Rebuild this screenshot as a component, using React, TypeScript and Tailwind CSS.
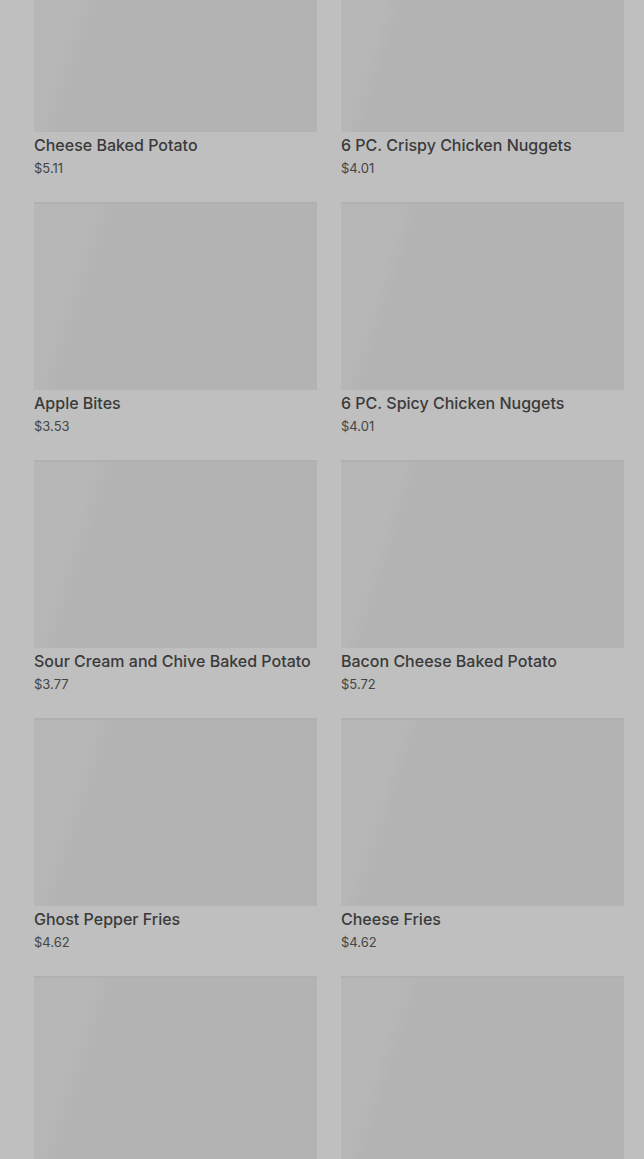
import React from 'react';

type Item = { name?: string; price?: string };

const items: Item[] = [
  { name: 'Cheese Baked Potato', price: '$5.11' },
  { name: '6 PC. Crispy Chicken Nuggets', price: '$4.01' },
  { name: 'Apple Bites', price: '$3.53' },
  { name: '6 PC. Spicy Chicken Nuggets', price: '$4.01' },
  { name: 'Sour Cream and Chive Baked Potato', price: '$3.77' },
  { name: 'Bacon Cheese Baked Potato', price: '$5.72' },
  { name: 'Ghost Pepper Fries', price: '$4.62' },
  { name: 'Cheese Fries', price: '$4.62' },
  // last row is scrolled below the fold, only the images show
  {},
  {},
];

const MenuCard: React.FC<Item> = ({ name, price }) => {
  return (
    <div className="flex flex-col">
      <div className="h-[188px] w-full border-t-[2px] border-[#b0b0b0] bg-[linear-gradient(108deg,#b7b7b7_0%,#b7b7b7_18%,#b3b3b3_24%,#b3b3b3_100%)]" />
      {name && (
        <>
          <h3 className="mt-[3px] text-[16px] leading-5 font-medium text-[#3a3a3a] whitespace-nowrap">
            {name}
          </h3>
          <p className="mt-[3px] text-[13px] leading-5 text-[#454545]">{price}</p>
        </>
      )}
    </div>
  );
};

const App: React.FC = () => {
  return (
    <div
      className="h-[1159px] overflow-hidden bg-[#bfbfbf] pl-[34px] pr-[20px]"
      style={{ fontFamily: 'Inter, "Noto Sans", sans-serif' }}
    >
      <div className="-mt-[56px] grid grid-cols-2 gap-x-[24px] gap-y-[24px]">
        {items.map((item, i) => (
          <MenuCard key={i} {...item} />
        ))}
      </div>
    </div>
  );
};

export default App;
